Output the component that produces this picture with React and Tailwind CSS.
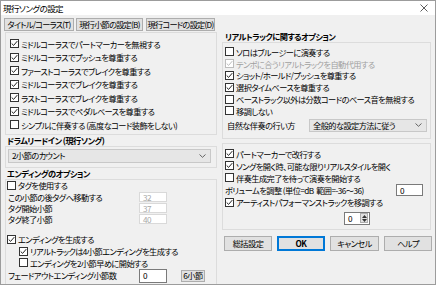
import React from "react";

const Check = ({ checked, disabled }) => (
  <span
    className={`w-[9px] h-[9px] border ${disabled ? "border-[#bcbcbc]" : "border-[#333333]"} bg-white flex items-center justify-center shrink-0`}
  >
    {checked && (
      <svg width="7" height="7" viewBox="0 0 7 7">
        <path d="M0.7 3.5 L2.6 5.4 L6.3 1.1" fill="none" stroke={disabled ? "#bcbcbc" : "#222"} strokeWidth="1" />
      </svg>
    )}
  </span>
);

const Row = ({ checked, disabled, children, h = "h-[13.5px]" }) => (
  <div className={`flex items-center gap-[2px] ${h} whitespace-nowrap`}>
    <Check checked={checked} disabled={disabled} />
    <span className={disabled ? "text-[#a0a0a0]" : "text-black"}>{children}</span>
  </div>
);

const Chevron = () => (
  <svg width="7" height="4" viewBox="0 0 7 4">
    <path d="M0.5 0.5 L3.5 3.3 L6.5 0.5" fill="none" stroke="#555" strokeWidth="0.9" />
  </svg>
);

const Btn = ({ children, primary, w = "w-[48px]" }) => (
  <div
    className={`${w} h-[15px] flex items-center justify-center whitespace-nowrap bg-[#e1e1e1] ${primary ? "border-2 border-[#0078d7] font-bold" : "border border-[#adadad]"}`}
  >
    {children}
  </div>
);

const Tab = ({ children, w }) => (
  <div className={`${w} h-[13px] flex items-center justify-center whitespace-nowrap tracking-[-0.75px] bg-[#e1e1e1] border border-[#adadad]`}>
    {children}
  </div>
);

export default function App() {
  return (
    <div className="w-[436px] h-[285px] overflow-hidden bg-[#f0f0f0] border border-[#9c9c9c] text-[8.2px] tracking-[-0.55px] leading-none text-black [font-family:'Noto_Sans_CJK_JP',sans-serif] [font-feature-settings:'palt']">
      {/* title bar */}
      <div className="h-[14px] bg-white flex items-center justify-between pl-[2px] pr-[7px]">
        <span className="text-[8.5px]">現行ソングの設定</span>
        <svg width="8" height="8" viewBox="0 0 8 8">
          <path d="M0.5 0.5 L7.5 7.5 M7.5 0.5 L0.5 7.5" stroke="#333" strokeWidth="0.8" />
        </svg>
      </div>

      <div className="flex">
        {/* left column */}
        <div className="w-[214px] ml-[3px] flex flex-col">
          <div className="flex mt-[3px] h-[13px]">
            <Tab w="w-[70px]">タイトル/コーラス(T)</Tab>
            <div className="ml-[2px]"><Tab w="w-[67px]">現行小節の設定(B)</Tab></div>
            <div className="ml-[3px]"><Tab w="w-[69px]">現行コードの設定(D)</Tab></div>
          </div>

          <div className="mt-[1px] ml-[1px] w-[212px] border border-[#dcdcdc] pt-[4px] pb-[2px] pl-[4px]">
            <Row checked>ミドルコーラスでパートマーカーを無視する</Row>
            <Row checked>ミドルコーラスでプッシュを尊重する</Row>
            <Row checked>ファーストコーラスでブレイクを尊重する</Row>
            <Row checked>ミドルコーラスでブレイクを尊重する</Row>
            <Row checked>ラストコーラスでブレイクを尊重する</Row>
            <Row checked>ミドルコーラスでペダルベースを尊重する</Row>
            <Row>シンプルに伴奏する (高度なコード装飾をしない)</Row>
          </div>

          <div className="h-[11px] flex items-center pl-[3px] font-bold">ドラムリードイン (現行ソング)</div>
          <div className="ml-[1px] w-[212px] border border-[#dcdcdc] pt-[2px] pb-[4px] pl-[2px]">
            <div className="w-[203px] h-[14px] bg-[#e6e6e6] border border-[#c8c8c8] flex items-center justify-between pl-[3px] pr-[4px]">
              <span>2小節のカウント</span>
              <Chevron />
            </div>
          </div>

          <div className="h-[11px] flex items-center pl-[3px] font-bold">エンディングのオプション</div>
          <div className="ml-[1px] w-[212px] h-[106px] border border-[#dcdcdc] pl-[1px]">
            <Row h="h-[12px]">タグを使用する</Row>
            {[
              ["この小節の後タグへ移動する", "32"],
              ["タグ開始小節", "37"],
              ["タグ終了小節", "40"],
            ].map(([l, v]) => (
              <div key={l} className="h-[11px] flex items-center pl-[1px]">
                <span className="w-[131px] whitespace-nowrap">{l}</span>
                <div className="w-[28px] h-[10px] bg-white border border-[#d9d9d9] text-[#a8a8a8] flex items-center pl-[3px]">{v}</div>
              </div>
            ))}
            <div className="mt-[9px]">
              <Row checked h="h-[12px]">エンディングを生成する</Row>
            </div>
            <div className="pl-[12px]">
              <Row checked h="h-[11.5px]">リアルトラックは4小節エンディングを生成する</Row>
              <Row h="h-[11.5px]">エンディングを2小節早めに開始する</Row>
            </div>
            <div className="h-[14px] flex items-center pl-[1px]">
              <span className="w-[131px] whitespace-nowrap">フェードアウトエンディング小節数</span>
              <div className="w-[28px] h-[14px] bg-white border border-[#7a7a7a] flex items-center pl-[3px]">0</div>
              <div className="ml-[14px] w-[24px] h-[12px] bg-[#e1e1e1] border border-[#adadad] flex items-center justify-center whitespace-nowrap">6小節</div>
            </div>
          </div>
        </div>

        {/* right column */}
        <div className="w-[210px] ml-[4px] flex flex-col">
          <div className="mt-[16px] h-[11px] flex items-center pl-[3px] font-bold">リアルトラックに関するオプション</div>
          <div className="w-[209px] border border-[#dcdcdc] pt-[3px] pb-[6px] pl-[2px]">
            <Row h="h-[11.8px]">ソロはブルージーに演奏する</Row>
            <Row checked disabled h="h-[11.8px]">テンポに合うリアルトラックを自動代用する</Row>
            <Row checked h="h-[11.8px]">ショット/ホールド/プッシュを尊重する</Row>
            <Row checked h="h-[11.8px]">選択タイムベースを尊重する</Row>
            <Row h="h-[11.8px]">ベーストラック以外は分数コードのベース音を無視する</Row>
            <Row h="h-[11.8px]">移調しない</Row>
            <div className="mt-[2px] h-[13px] flex items-center pl-[2px]">
              <span className="w-[82px] whitespace-nowrap">自然な伴奏の行い方</span>
              <div className="w-[118px] h-[13px] bg-[#e6e6e6] border border-[#c8c8c8] flex items-center justify-between pl-[3px] pr-[4px]">
                <span className="whitespace-nowrap">全般的な設定方法に従う</span>
                <Chevron />
              </div>
            </div>
          </div>

          <div className="mt-[4px] w-[209px] border border-[#dcdcdc] pt-[4px] pb-[4px] pl-[2px]">
            <Row checked h="h-[12px]">パートマーカーで改行する</Row>
            <Row checked h="h-[12px]">ソングを開く時、可能な限りリアルスタイルを開く</Row>
            <Row h="h-[12px]">伴奏生成完了を待って演奏を開始する</Row>
            <div className="h-[12px] flex items-center">
              <span className="w-[171px] whitespace-nowrap">ボリュームを調整 (単位=dB&nbsp;&nbsp;範囲=-36～36)</span>
              <div className="w-[27px] h-[12px] bg-white border border-[#7a7a7a] flex items-center pl-[3px]">0</div>
            </div>
            <Row checked h="h-[13px]">アーティストパフォーマンストラックを移調する</Row>
            <div className="mt-[3px] h-[13px] flex pl-[119px]">
              <div className="w-[26px] h-[13px] bg-white border border-[#7a7a7a] flex items-center justify-between pl-[3px] pr-[1px]">
                <span>0</span>
                <div className="w-[8px] h-[10px] bg-[#e1e1e1] border border-[#adadad] flex flex-col items-center justify-center gap-[1px]">
                  <svg width="5" height="3" viewBox="0 0 5 3"><path d="M0 3 L2.5 0 L5 3 Z" fill="#333" /></svg>
                  <svg width="5" height="3" viewBox="0 0 5 3"><path d="M0 0 L2.5 3 L5 0 Z" fill="#333" /></svg>
                </div>
              </div>
            </div>
          </div>

          <div className="mt-[6px] ml-[2px] flex gap-[5px]">
            <Btn>総括設定</Btn>
            <Btn primary>OK</Btn>
            <Btn w="w-[49px]">キャンセル</Btn>
            <Btn>ヘルプ</Btn>
          </div>
        </div>
      </div>
    </div>
  );
}
